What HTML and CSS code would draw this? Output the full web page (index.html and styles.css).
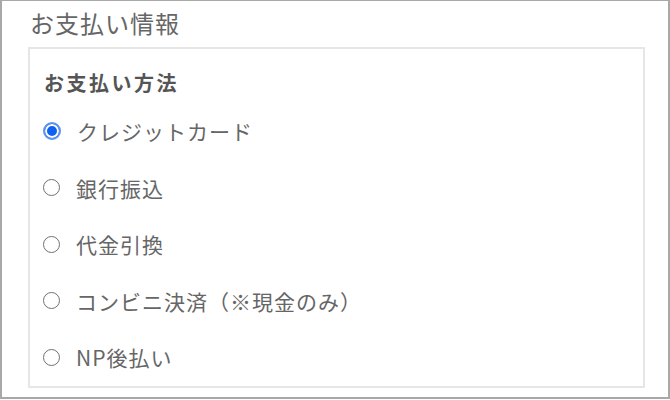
FILE: index.html
```html
<!DOCTYPE html>
<html lang="ja">
<head>
<meta charset="utf-8">
<title>お支払い情報</title>
<link rel="stylesheet" href="styles.css">
</head>
<body>
<div class="frame">
  <h1 class="title">お支払い情報</h1>
  <fieldset class="box">
    <h2 class="heading">お支払い方法</h2>
    <ul class="options">
      <li class="option"><label class="label"><input class="radio" type="radio" name="pay" checked><span class="text">クレジットカード</span></label></li>
      <li class="option"><label class="label"><input class="radio" type="radio" name="pay"><span class="text">銀行振込</span></label></li>
      <li class="option"><label class="label"><input class="radio" type="radio" name="pay"><span class="text">代金引換</span></label></li>
      <li class="option"><label class="label"><input class="radio" type="radio" name="pay"><span class="text">コンビニ決済（※現金のみ）</span></label></li>
      <li class="option"><label class="label"><input class="radio" type="radio" name="pay"><span class="text">NP後払い</span></label></li>
    </ul>
  </fieldset>
</div>
</body>
</html>
```
FILE: styles.css
```css
html, body {
  margin: 0;
  padding: 0;
  background: #ffffff;
}
body {
  font-family: "Noto Sans CJK JP", "Noto Sans", sans-serif;
  color: #666666;
}
.frame {
  box-sizing: border-box;
  width: 670px;
  height: 399px;
  border: 2px solid #a8a8a8;
  border-top-width: 1px;
  padding: 5px 23px 0 26px;
}
.title {
  margin: 0 0 8px 0;
  font-size: 24px;
  line-height: 33px;
  font-weight: 400;
  letter-spacing: 1px;
  color: #666666;
  padding-left: 2px;
}
.box {
  box-sizing: border-box;
  margin: 0;
  height: 341px;
  border: 2px solid #e6e6e6;
  padding: 19px 13px 0 13px;
  min-width: 0;
}
.heading {
  margin: 0;
  font-size: 20px;
  line-height: 30px;
  font-weight: 700;
  letter-spacing: 2.5px;
  color: #555555;
  padding-left: 1px;
}
.options {
  list-style: none;
  margin: 5px 0 0 0;
  padding: 0;
}
.option {
  height: 56.5px;
  display: flex;
  align-items: center;
}
.label {
  display: flex;
  align-items: center;
  gap: 16px;
}
.radio {
  appearance: none;
  -webkit-appearance: none;
  box-sizing: border-box;
  margin: 0;
  width: 17px;
  height: 17px;
  border-radius: 50%;
  border: 1.5px solid #707070;
  background: #ffffff;
  flex: none;
}
.radio:checked {
  width: 18px;
  height: 18px;
  border: 2px solid #5b93f2;
  background: #0f62f0;
  box-shadow: inset 0 0 0 2px #ffffff;
}
.text {
  font-size: 21px;
  line-height: 30px;
  letter-spacing: 1px;
  color: #666666;
}
```
